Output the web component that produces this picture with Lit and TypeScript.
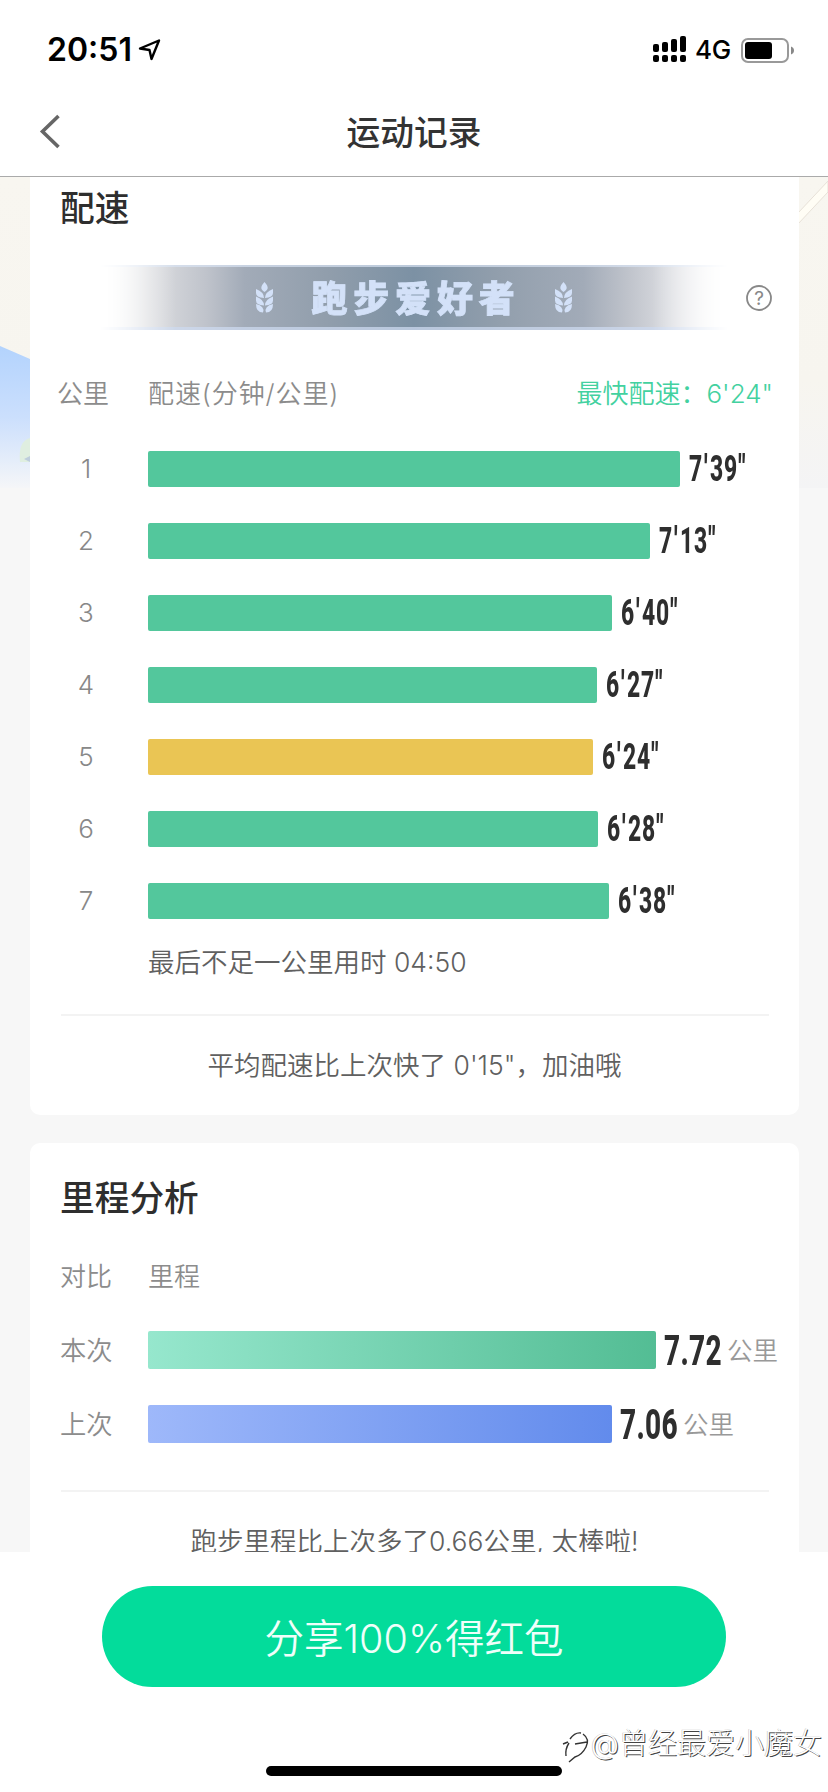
import { LitElement, html, css, svg } from "lit";
import { customElement, property } from "lit/decorators.js";
import { classMap } from "lit/directives/class-map.js";

const base = css`
  * { box-sizing: border-box; }
  :host {
    display: block;
    font-family: Inter, "Noto Sans CJK SC", sans-serif;
  }
  svg { display: block; overflow: visible; }
`;

@customElement("status-bar")
class StatusBar extends LitElement {
  static styles = [base, css`
    .bar { height: 88px; padding: 12px 34px 0 47px; display: flex; align-items: center; background: #fff; color: #000; }
    .time { width: 82px; margin-right: 10px; font-size: 32px; font-weight: 600; letter-spacing: 0; line-height: 36px; white-space: nowrap; }
    .right { margin-left: auto; display: flex; align-items: center; }
    .net { width: 36px; margin: 0 10px 0 9px; font-size: 26px; font-weight: 500; line-height: 30px; letter-spacing: -0.4px; }
  `];
  render() {
    const xs = [0, 9, 18, 27];
    const tops = [8, 6, 3, 0];
    return html`<div class="bar">
      <span class="time">20:51</span>
      <svg width="22" height="22" viewBox="0 0 22 22"><path d="M1 9.500 L20 1.500 L12.500 20 L10.500 11 Z" fill="none" stroke="#000" stroke-width="2.400" stroke-linejoin="round"/></svg>
      <div class="right">
        <svg width="33" height="27" viewBox="0 0 33 27">
          ${xs.map((x, i) => svg`<rect x=${x} y=${tops[i] - 1} width="6" height=${16 - tops[i]} rx="2"/><rect x=${x} y="18" width="6" height="7" rx="2"/>`)}
        </svg>
        <span class="net">4G</span>
        <svg width="53" height="25" viewBox="0 0 53 25">
          <rect x="1" y="1" width="46" height="23" rx="6" fill="none" stroke="#999" stroke-width="2"/>
          <rect x="4" y="4" width="27" height="17" rx="3"/>
          <path d="M50 8.500c4 1.200 4 6.800 0 8z" fill="#888"/>
        </svg>
      </div>
    </div>`;
  }
}

@customElement("nav-header")
class NavHeader extends LitElement {
  static styles = [base, css`
    .nav { height: 89px; padding: 0 40px; display: grid; grid-template-columns: 60px 1fr 60px; align-items: center; background: #fff; border-bottom: 1px solid #aaa; }
    .title { text-align: center; font-size: 33.700px; font-weight: 500; line-height: 40px; color: #333; padding-top: 1px; }
  `];
  render() {
    return html`<div class="nav">
      <svg width="20" height="34" viewBox="0 0 20 34"><path d="M18.500 1 L2.500 16.500 L18.500 32" fill="none" stroke="#666" stroke-width="3.600"/></svg>
      <div class="title">运动记录</div>
    </div>`;
  }
}

@customElement("rank-banner")
class RankBanner extends LitElement {
  static styles = [base, css`
    .wrap { height: 65px; padding-left: 70px; display: flex; align-items: center; }
    .banner {
      width: 628px; height: 65px; display: flex; align-items: center; justify-content: center;
      background: linear-gradient(90deg, #fff 0%, #dcdde0 8%, #bfc3cb 17%, #a2abb8 23%, #919eac 36%, #7c91a4 50%, #919eac 63%, #a2abb8 77%, #bfc3cb 84%, #e0e1e5 92%, #fff 100%);
      border-top: 2px solid rgba(215, 226, 242, .7); border-bottom: 3px solid rgba(205, 218, 240, .75);
      -webkit-mask-image: linear-gradient(90deg, transparent, #000 12%, #000 88%, transparent);
      mask-image: linear-gradient(90deg, transparent, #000 12%, #000 88%, transparent);
    }
    .name { margin: 0 34px 0 38px; padding-top: 3px; font-size: 36px; font-weight: 900; letter-spacing: 5.800px; line-height: 46px; color: #d3e1f8; -webkit-text-stroke: .8px #d3e1f8; white-space: nowrap; }
    .help { margin-left: 18px; }
    .q { font: 19px Inter, sans-serif; fill: #888; }
  `];
  wheat() {
    return html`<svg width="17" height="30" viewBox="0 0 17 30"><g fill="#d3e1f8" transform="translate(0 1)">
      <path d="M8.500 -1 C13 4 12.500 6.500 8.500 9 C4.500 6.500 4 4 8.500 -1Z"/>
      ${[6, 13.500].map(y => svg`<path transform="translate(0 ${y})" d="M0 0 Q8 3 8 9 Q0 8.500 0 4Z M17 0 Q9 3 9 9 Q17 8.500 17 4Z"/>`)}
      <path d="M0 21 Q9 23 7 29.500 Q0 29.500 0 21Z M17 21 Q8 23 10 29.500 Q17 29.500 17 21Z"/>
    </g></svg>`;
  }
  render() {
    return html`<div class="wrap">
      <div class="banner">${this.wheat()}<span class="name">跑步爱好者</span>${this.wheat()}</div>
      <svg class="help" width="26" height="26" viewBox="0 0 26 26"><circle cx="13" cy="13" r="12" fill="none" stroke="#888" stroke-width="1.800"/><text class="q" x="13" y="20" text-anchor="middle">?</text></svg>
    </div>`;
  }
}

@customElement("pace-row")
class PaceRow extends LitElement {
  @property({ type: Number }) km = 0;
  @property({ type: Number }) width = 0;
  @property() pace = "";
  @property({ type: Boolean }) best = false;
  static styles = [base, css`
    .row { height: 36px; display: flex; align-items: center; }
    .km { width: 70px; margin-right: 27px; padding-bottom: 1px; text-align: center; font-size: 26px; font-weight: 300; color: #888; }
    .bar { height: 36px; border-radius: 2px; background: #53c79c; }
    .best { background: #eac554; }
    .pace { margin-left: 8.500px; width: 60px; font-family: Roboto, sans-serif; font-weight: 800; font-size: 36px; letter-spacing: 1.500px; line-height: 36px; color: #2e2e2e; white-space: nowrap; transform: scaleX(.635); transform-origin: 0 50%; }
    .tick { margin-left: 1.500px; margin-right: 2px; }
  `];
  render() {
    const [min, sec] = this.pace.split("'");
    return html`<div class="row">
      <span class="km">${this.km}</span>
      <div class=${classMap({ bar: true, best: this.best })} style="width:${this.width}px"></div>
      <span class="pace">${min}<span class="tick">'</span>${sec}</span>
    </div>`;
  }
}

@customElement("distance-row")
class DistanceRow extends LitElement {
  @property() label = "";
  @property({ type: Number }) width = 0;
  @property() value = "";
  @property({ type: Boolean }) previous = false;
  static styles = [base, css`
    .row { height: 38px; display: flex; align-items: center; white-space: nowrap; }
    .label { width: 88px; padding-bottom: 3px; font-size: 26.300px; font-weight: 350; color: #8c8c8c; }
    .bar { height: 38px; border-radius: 2px; background: linear-gradient(90deg, #96e7cd, #53bd94); }
    .previous { background: linear-gradient(90deg, #9eb8fa, #628bec); }
    .value { width: 63px; margin-left: 8px; font-family: Roboto, sans-serif; font-weight: 800; font-size: 43px; line-height: 38px; letter-spacing: .5px; color: #2e2e2e; transform: scaleX(.65); transform-origin: 0 50%; }
    .unit { padding-bottom: 3px; font-size: 25.500px; font-weight: 350; color: #999; }
  `];
  render() {
    return html`<div class="row">
      <span class="label">${this.label}</span>
      <div class=${classMap({ bar: true, previous: this.previous })} style="width:${this.width}px"></div>
      <span class="value">${this.value}</span>
      <span class="unit">公里</span>
    </div>`;
  }
}

@customElement("app-root")
class AppRoot extends LitElement {
  static styles = [base, css`
    :host { width: 828px; height: 1792px; background: #fff; overflow: hidden; }
    .page { height: 1792px; display: flex; flex-direction: column; position: relative; }
    .scroll { height: 1375px; overflow: hidden; background: #f7f7f7; padding: 0 29px 0 30px; position: relative; }
    .scene { position: absolute; left: 0; top: 0; }
    .card { position: relative; background: #fff; border-radius: 10px; }
    .pace { height: 938px; border-radius: 0 0 10px 10px; display: flex; flex-direction: column; }
    .dist { margin-top: 28px; height: 500px; padding-top: 34px; }
    .title { padding-left: 30px; font-size: 34.700px; font-weight: 500; line-height: 42px; color: #2e2e2e; }
    .pace .title { padding-top: 10px; margin-bottom: 36px; }
    .head { margin-top: 42px; height: 38px; padding: 0 26px 0 27px; display: flex; align-items: center; font-size: 26px; font-weight: 350; color: #8c8c8c; white-space: nowrap; }
    .head .c1 { width: 91px; }
    .head .metric { letter-spacing: .9px; }
    .head .best { margin-left: auto; color: #43d19f; }
    .rows { padding: 41px 0 0 21px; display: grid; gap: 36px; }
    .last { padding: 24px 0 0 118px; font-size: 26.500px; font-weight: 350; line-height: 38px; color: #606060; }
    .rule { margin: 33px 30px 0 31px; height: 2px; background: #f3f3f3; }
    .summary { margin-top: 30px; text-align: center; font-size: 26.500px; font-weight: 350; line-height: 38px; color: #606060; white-space: nowrap; }
    .dist .head { margin-top: 36px; padding-left: 30px; }
    .dist .head .c1 { width: 88px; }
    .dist .rows { padding: 38px 0 0 30px; }
    .dist .rule { margin-top: 47px; }
    .foot { flex: 1; display: flex; flex-direction: column; align-items: center; padding-top: 34px; }
    .share { width: 624px; height: 101px; border: 0; border-radius: 51px; background: #03dc9b; color: #effffa; font: 350 39.500px/103px Inter, "Noto Sans CJK SC", sans-serif; padding: 2px 0 0; white-space: nowrap; }
    .home { width: 296px; height: 10px; border-radius: 5px; background: #000; margin-top: 79px; }
    .mark { position: absolute; right: 6px; bottom: 28px; display: flex; align-items: center; font-size: 29px; font-weight: 300; line-height: 40px; color: #fff; text-shadow: 1px 1px 0 #444, -.5px -.5px 0 #bbb; white-space: nowrap; }
    .logo { margin-top: 6px; }
  `];
  render() {
    const paces: [number, string][] = [
      [532, `7'39"`], [502, `7'13"`], [464, `6'40"`], [449, `6'27"`], [445, `6'24"`], [450, `6'28"`], [461, `6'38"`],
    ];
    return html`<div class="page">
      <status-bar></status-bar>
      <nav-header></nav-header>
      <div class="scroll">
        <svg class="scene" width="828" height="311" viewBox="0 0 828 311">
          <defs>
            <linearGradient id="sky" x1="0" y1="0" x2="0" y2="1"><stop offset="0" stop-color="#f8f6f0"/><stop offset=".65" stop-color="#f7f5ef"/><stop offset="1" stop-color="#f4f4f5"/></linearGradient>
            <linearGradient id="hill" x1="0" y1="0" x2="0" y2="1"><stop offset="0" stop-color="#b3d3fd"/><stop offset=".5" stop-color="#cbdffd"/><stop offset="1" stop-color="#f5f6f8"/></linearGradient>
          </defs>
          <rect width="828" height="311" fill="url(#sky)"/>
          <path d="M0 169 L30 182 V311 H0Z" fill="url(#hill)"/>
          <path d="M30 261 Q18 264 20 285 H30Z" fill="#dfeee0"/><path d="M24 282 l6 -3 v6z" fill="#bdcddc"/>
          <path d="M798 36 L828 4 V15 L798 47Z" fill="#fffdf5" stroke="#e7e1d8" stroke-width="1"/>
        </svg>
        <section class="card pace">
          <div class="title">配速</div>
          <rank-banner></rank-banner>
          <div class="head"><span class="c1">公里</span><span class="metric">配速(分钟/公里)</span><span class="best">最快配速：6'24"</span></div>
          <div class="rows">
            ${paces.map(([w, p], i) => html`<pace-row .km=${i + 1} .width=${w} .pace=${p} .best=${i === 4}></pace-row>`)}
          </div>
          <div class="last">最后不足一公里用时 04:50</div>
          <div class="rule"></div>
          <div class="summary">平均配速比上次快了 0'15"，加油哦</div>
        </section>
        <section class="card dist">
          <div class="title">里程分析</div>
          <div class="head"><span class="c1">对比</span><span>里程</span></div>
          <div class="rows">
            <distance-row label="本次" .width=${508} value="7.72"></distance-row>
            <distance-row label="上次" .width=${464} value="7.06" previous></distance-row>
          </div>
          <div class="rule"></div>
          <div class="summary">跑步里程比上次多了0.66公里, 太棒啦!</div>
        </section>
      </div>
      <div class="foot">
        <button class="share">分享100%得红包</button>
        <div class="home"></div>
      </div>
      <div class="mark">
        <svg class="logo" width="28" height="32" viewBox="0 0 28 32" fill="none" stroke="#333" stroke-width="1.400"><path d="M0 13 L5 11 M7 8 Q12 1 18 2 M20 3 Q27 8 23 16 Q19 24 12 26 L6 31 M3 25 Q2 18 6 12 M12 13 L24 11"/></svg>
        <span>@曾经最爱小魔女</span>
      </div>
    </div>`;
  }
}
